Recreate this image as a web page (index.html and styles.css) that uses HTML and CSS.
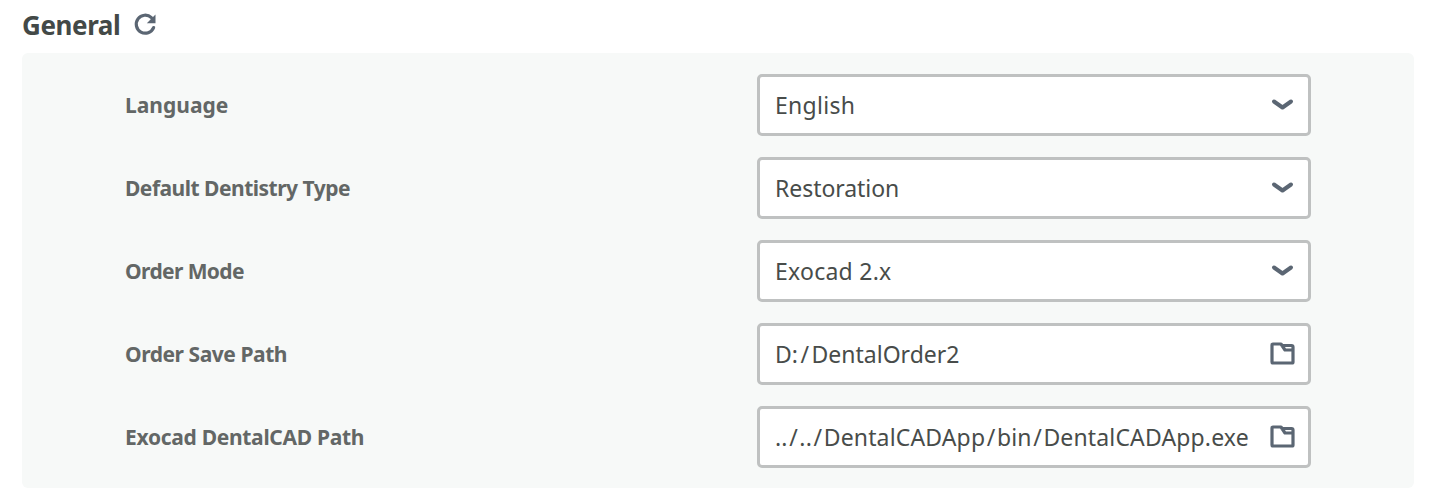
FILE: index.html
```html
<!DOCTYPE html>
<html lang="en">
<head>
<meta charset="utf-8">
<title>General</title>
<link rel="stylesheet" href="styles.css">
</head>
<body>
<header class="header">
  <h1 class="title">General</h1>
  <svg class="refresh" viewBox="0 0 24 24" width="24" height="24"><path d="M20.6 15.6A9 9 0 1 1 18.4 5.6"/><path class="solid" d="M22.5 2.5v8.7h-8.7z"/></svg>
</header>
<main class="panel">
  <div class="row"><span class="label l1">Language</span><div class="field"><span class="value v1">English</span><svg class="chevron" viewBox="0 0 24 14" width="24" height="14"><path d="M3 3.5l8.500 6 8.500-6"/></svg></div></div>
  <div class="row"><span class="label l2">Default Dentistry Type</span><div class="field"><span class="value v2">Restoration</span><svg class="chevron" viewBox="0 0 24 14" width="24" height="14"><path d="M3 3.500l8.500 6 8.500-6"/></svg></div></div>
  <div class="row"><span class="label l3">Order Mode</span><div class="field"><span class="value v3">Exocad 2.x</span><svg class="chevron" viewBox="0 0 24 14" width="24" height="14"><path d="M3 3.500l8.500 6 8.500-6"/></svg></div></div>
  <div class="row"><span class="label l4">Order Save Path</span><div class="field"><span class="value v4">D:<span class="slash">/</span>DentalOrder2</span><svg class="folder" viewBox="0 0 26 24" width="26" height="24"><path d="M4 2h8l4 6h7a1 1 0 0 1 1 1v11a1 1 0 0 1-1 1H4a1 1 0 0 1-1-1V3a1 1 0 0 1 1-1zM13 3.500h9.500a1.500 1.500 0 0 1 1.500 1.500V9"/></svg></div></div>
  <div class="row"><span class="label l5">Exocad DentalCAD Path</span><div class="field"><span class="value v5">..<span class="slash">/</span>..<span class="slash">/</span>DentalCADApp<span class="slash">/</span>bin<span class="slash">/</span>DentalCADApp.exe</span><svg class="folder" viewBox="0 0 26 24" width="26" height="24"><path d="M4 2h8l4 6h7a1 1 0 0 1 1 1v11a1 1 0 0 1-1 1H4a1 1 0 0 1-1-1V3a1 1 0 0 1 1-1zM13 3.500h9.500a1.500 1.500 0 0 1 1.500 1.500V9"/></svg></div></div>
</main>
</body>
</html>
```
FILE: styles.css
```css
* { box-sizing: border-box; }
body { margin: 0; background: #fff; font-family: "Noto Sans", sans-serif; overflow: hidden; }
.header { display: flex; align-items: center; gap: 12.5px; height: 53px; padding: 0 22px 4px; }
.title { margin: 0; font-size: 26px; line-height: 34px; font-weight: 700; letter-spacing: -.4px; color: #434947; }
.refresh { margin-bottom: 1px; fill: none; stroke: #5b6673; stroke-width: 3.2; stroke-linecap: round; }
.solid { fill: #5b6673; stroke: none; }
.panel { display: flex; flex-direction: column; gap: 21px; height: 435px; margin: 0 17px 0 22px; padding: 21px 103px; border-radius: 6px; background: #f7f9f8; }
.row { display: flex; align-items: center; justify-content: space-between; height: 62px; }
.label { font-size: 21px; font-weight: 700; color: #636766; white-space: nowrap; }
.l1 { letter-spacing: 0; }
.l2 { letter-spacing: -.5px; }
.l3 { letter-spacing: -.6px; }
.l4 { letter-spacing: -.45px; }
.l5 { letter-spacing: -.3px; }
.field { display: flex; align-items: center; justify-content: space-between; width: 554px; height: 62px; padding: 0 13px 0 15px; border: 3px solid #bfc1c1; border-radius: 5px; background: #fff; }
.value { font-size: 23px; font-weight: 400; color: #484c4a; white-space: nowrap; }
.v1 { letter-spacing: .3px; }
.v2 { letter-spacing: -.05px; }
.v3 { letter-spacing: .25px; }
.v4 { letter-spacing: 0; }
.v5 { letter-spacing: .15px; }
.slash { margin: 0 1.500px; }
.v4 .slash { margin: 0 2.5px; }
.chevron, .folder { flex: none; fill: none; stroke: #5b6673; stroke-width: 3.200px; stroke-linecap: round; stroke-linejoin: round; }
.chevron { stroke-width: 4px; }
```
